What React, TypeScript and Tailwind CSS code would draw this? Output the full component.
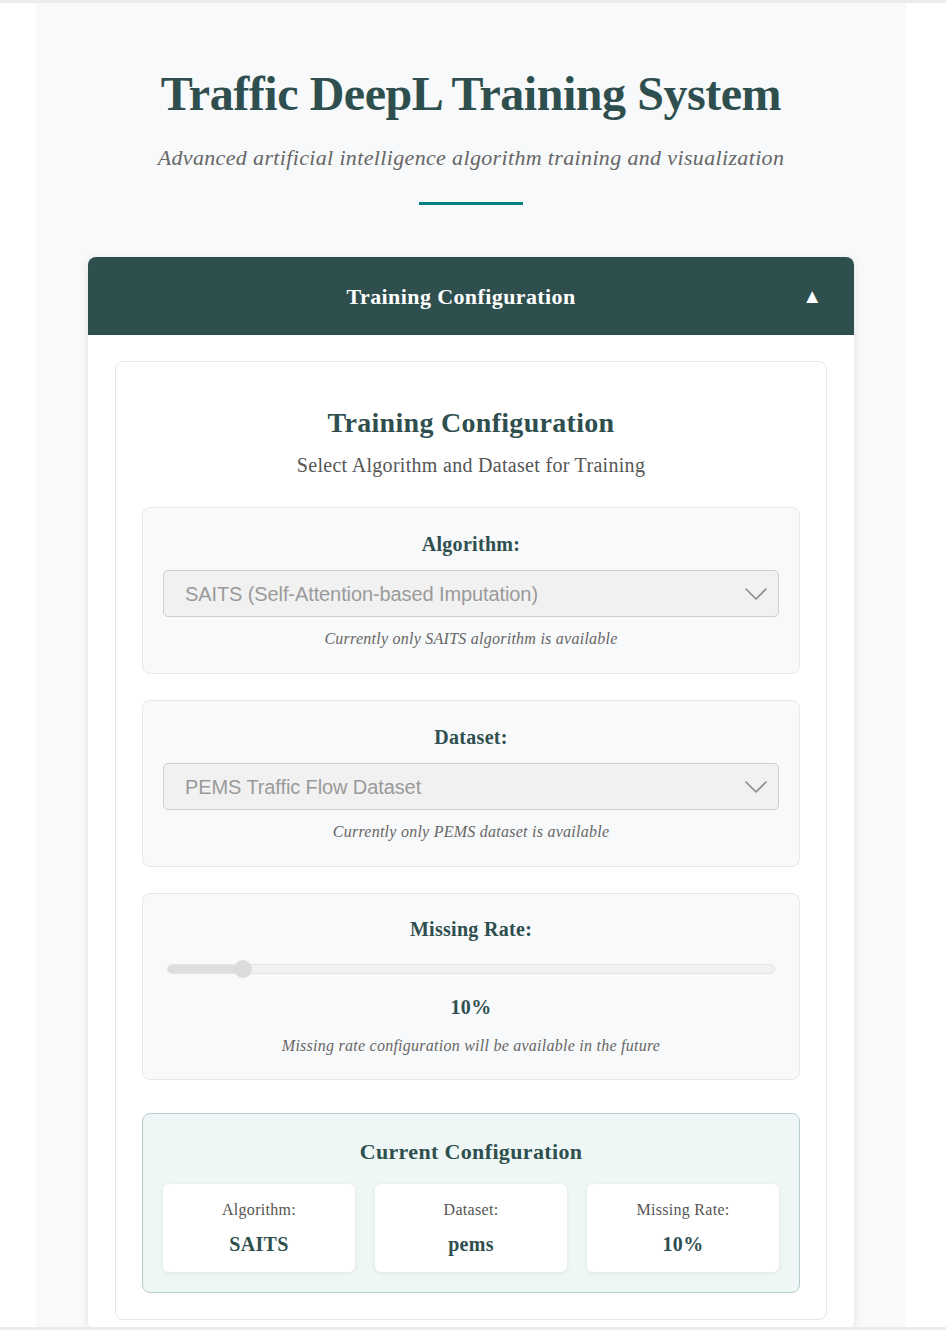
const serif = "font-['Liberation_Serif','Times_New_Roman',serif]";

interface SelectProps {
  label: string;
  value: string;
  note: string;
}

function Chevron() {
  return (
    <svg width="24" height="14" viewBox="0 0 24 14" fill="none" className="text-[#8a8a8a]">
      <polyline points="2,2 12,12 22,2" stroke="currentColor" strokeWidth="1.6" strokeLinecap="round" strokeLinejoin="round" />
    </svg>
  );
}

function SelectBox({ label, value, note }: SelectProps) {
  return (
    <div className="rounded-lg border border-[#e6e8ea] bg-[#f8f9fa] px-[20px] pt-[22px] pb-[23px] text-center">
      <p className="text-[20px] font-bold leading-[28px] tracking-[0.3px] text-[#2f4f4f]">{label}</p>
      <div className="mt-[12px] flex h-[47px] items-center justify-between rounded-[5px] border border-[#cfcfcf] bg-[#f1f1f1] pl-[21px] pr-[10px]">
        <span className="font-['Liberation_Sans',Arial,sans-serif] text-[20px] tracking-[-0.1px] text-[#9a9a9a]">{value}</span>
        <Chevron />
      </div>
      <p className="mt-[11px] text-[16px] italic leading-[22px] tracking-[0.25px] text-[#666]">{note}</p>
    </div>
  );
}

function SummaryItem({ label, value }: { label: string; value: string }) {
  return (
    <div className="flex h-[88px] flex-col items-center justify-center rounded-md bg-white shadow-[0_1px_4px_rgba(0,0,0,0.08)]">
      <p className="text-[16px] leading-[20px] tracking-[0.3px] text-[#555]">{label}</p>
      <p className="mt-[12px] text-[20px] font-bold leading-[24px] tracking-[0.3px] text-[#2f4f4f]">{value}</p>
    </div>
  );
}

export default function App() {
  return (
    <div className={`h-[1330px] overflow-hidden border-t-[3px] border-b-[3px] border-[#ececec] bg-white ${serif}`}>
      <div className="ml-[36px] w-[870px] bg-[#f8f9fa] px-[52px] pt-[62px] pb-[40px]">
        {/* Page header */}
        <div className="text-center">
          <h1 className="text-[48px] font-bold leading-[58px] tracking-[-0.45px] text-[#2f4f4f]">Traffic DeepL Training System</h1>
          <p className="mt-[21px] text-[22px] italic leading-[28px] tracking-[0.35px] text-[#666]">
            Advanced artificial intelligence algorithm training and visualization
          </p>
          <div className="mx-auto mt-[30px] h-[3px] w-[104px] bg-[#008080]" />
        </div>

        {/* Collapsible card */}
        <div className="mt-[52px] overflow-hidden rounded-lg bg-white shadow-[0_2px_8px_rgba(0,0,0,0.1)]">
          <div className="flex h-[78px] items-center bg-[#2f4f4f] px-[32px]">
            <p className="flex-1 text-center text-[22px] font-bold tracking-[0.4px] text-white">Training Configuration</p>
            <span className="text-[20px] leading-none text-white">▲</span>
          </div>

          <div className="px-[27px] pt-[26px] pb-[10px]">
            <div className="rounded-lg border border-[#e6e6e6] bg-white px-[26px] pt-[44px] pb-[26px]">
              <h2 className="text-center text-[28px] font-bold leading-[34px] tracking-[0.3px] text-[#2f4f4f]">Training Configuration</h2>
              <p className="mt-[12px] text-center text-[20px] leading-[26px] tracking-[0.3px] text-[#555]">
                Select Algorithm and Dataset for Training
              </p>

              <div className="mt-[29px] flex flex-col gap-[26px]">
                <SelectBox
                  label="Algorithm:"
                  value="SAITS (Self-Attention-based Imputation)"
                  note="Currently only SAITS algorithm is available"
                />
                <SelectBox
                  label="Dataset:"
                  value="PEMS Traffic Flow Dataset"
                  note="Currently only PEMS dataset is available"
                />

                <div className="rounded-lg border border-[#e6e8ea] bg-[#f8f9fa] px-[24px] pt-[21px] pb-[22px] text-center">
                  <p className="text-[20px] font-bold leading-[28px] tracking-[0.3px] text-[#2f4f4f]">Missing Rate:</p>
                  <div className="relative mt-[21px] h-[10px] rounded-full border border-[#e4e4e4] bg-[#f1f1f1]">
                    <div className="h-full w-[76px] rounded-full bg-[#dedede]" />
                    <div className="absolute top-1/2 left-[66px] h-[18px] w-[18px] -translate-y-1/2 rounded-full bg-[#dcdcdc]" />
                  </div>
                  <p className="mt-[20px] text-[20px] font-bold leading-[26px] tracking-[0.3px] text-[#2f4f4f]">10%</p>
                  <p className="mt-[15px] text-[16px] italic leading-[22px] tracking-[0.25px] text-[#666]">
                    Missing rate configuration will be available in the future
                  </p>
                </div>

                <div className="mt-[7px] rounded-lg border border-[#b6cccc] bg-[#eef7f6] px-[20px] pt-[24px] pb-[20px]">
                  <h3 className="text-center text-[22px] font-bold leading-[28px] tracking-[0.35px] text-[#2f4f4f]">Current Configuration</h3>
                  <div className="mt-[18px] grid grid-cols-3 gap-[20px]">
                    <SummaryItem label="Algorithm:" value="SAITS" />
                    <SummaryItem label="Dataset:" value="pems" />
                    <SummaryItem label="Missing Rate:" value="10%" />
                  </div>
                </div>
              </div>
            </div>
          </div>
        </div>
      </div>
    </div>
  );
}
